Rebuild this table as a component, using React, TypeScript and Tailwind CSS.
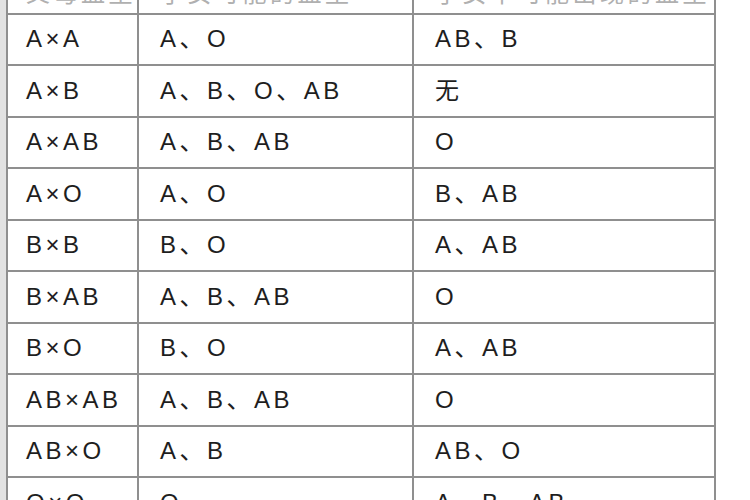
const rows: [string, string, string][] = [
  ["A×A", "A、O", "AB、B"],
  ["A×B", "A、B、O、AB", "无"],
  ["A×AB", "A、B、AB", "O"],
  ["A×O", "A、O", "B、AB"],
  ["B×B", "B、O", "A、AB"],
  ["B×AB", "A、B、AB", "O"],
  ["B×O", "B、O", "A、AB"],
  ["AB×AB", "A、B、AB", "O"],
  ["AB×O", "A、B", "AB、O"],
  ["O×O", "O", "A、B、AB"],
]

const font = {
  fontFamily: '"Liberation Sans", "Noto Sans CJK SC", sans-serif',
}

export default function App() {
  return (
    <div className="flex h-[500px] w-[750px] overflow-hidden bg-white" style={font}>
      {/* left scan edge */}
      <div className="h-full w-[6px] bg-[#e2e2e2]" />

      <div className="flex w-[710px] flex-col border-x-2 border-[#8f8f8f] text-[24px] tracking-[3.5px] text-[#1e1e1e]">
        {/* header row, mostly cut off */}
        <div className="-mt-[37px] grid h-[51.5px] shrink-0 grid-cols-[131px_275px_300px] border-b-2 border-[#8f8f8f]">
          <div className="flex items-end border-r-2 border-[#8f8f8f] pb-[7px] pl-[18px] leading-[24px] text-[#b0b0b0]">父母血型</div>
          <div className="flex items-end border-r-2 border-[#8f8f8f] pb-[7px] pl-[21px] leading-[24px] text-[#b0b0b0]">子女可能的血型</div>
          <div className="flex items-end pb-[7px] pl-[21px] leading-[24px] text-[#b0b0b0]">子女不可能出现的血型</div>
        </div>

        {rows.map(([parents, can, cannot]) => (
          <div
            key={parents}
            className="grid h-[51.5px] shrink-0 grid-cols-[131px_275px_300px] border-b-2 border-[#8f8f8f]"
          >
            <div className="flex items-center border-r-2 border-[#8f8f8f] pl-[18px] leading-none">{parents}</div>
            <div className="flex items-center border-r-2 border-[#8f8f8f] pl-[21px] leading-none">{can}</div>
            <div className="flex items-center pl-[21px] leading-none">{cannot}</div>
          </div>
        ))}
      </div>
    </div>
  )
}
